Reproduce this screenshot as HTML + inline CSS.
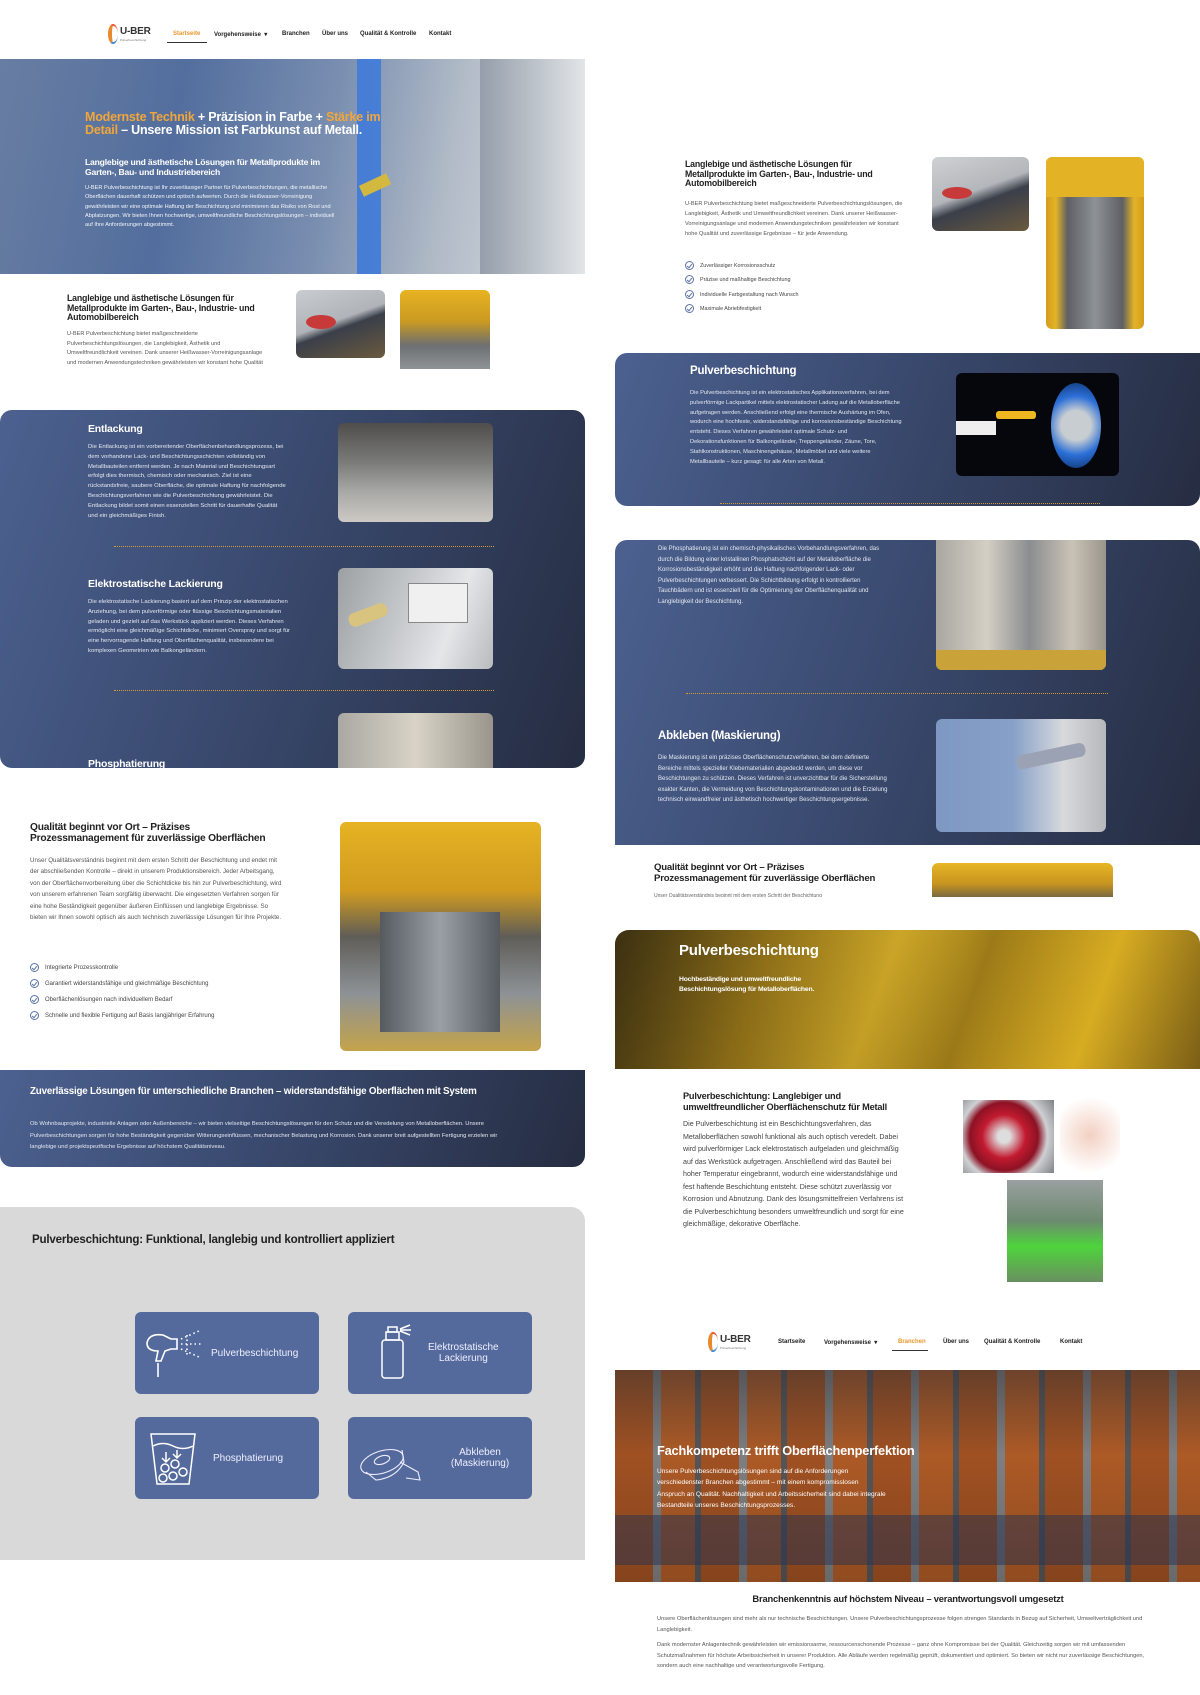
<!DOCTYPE html>
<html><head><meta charset="utf-8"><style>
*{margin:0;padding:0;box-sizing:border-box}
body{width:1200px;height:1695px;position:relative;background:#fff;font-family:"Liberation Sans",sans-serif;overflow:hidden;color:#333}
.a{position:absolute}
.nav{font-size:6px;color:#222;font-weight:bold}
.h{font-weight:bold;color:#222;letter-spacing:-0.2px}
.w{color:#fff}
.b{font-size:6px;line-height:10px;color:#555}
.bw{font-size:5.9px;line-height:9.8px;color:#e4e8f0}
.img{position:absolute;border-radius:6px;overflow:hidden}
.dark{background:linear-gradient(110deg,#4c6190 0%,#3a4a6f 45%,#262d42 100%)}
.dot{position:absolute;border-top:1px dotted #d49a3a;height:0}
.chk{display:inline-block;width:9px;height:9px;border:1px solid #5c72a8;border-radius:50%;vertical-align:middle;margin-right:6px;position:relative}
.chk:after{content:"";position:absolute;left:2px;top:1px;width:2px;height:4px;border:solid #5c72a8;border-width:0 1px 1px 0;transform:rotate(40deg)}
.li{font-size:6px;color:#444;height:15px;line-height:15px}
.card{position:absolute;background:#546a9c;border-radius:6px;color:#eef;font-size:10px;display:flex;align-items:center}
</style></head><body>

<!-- NAV 1 -->
<div class="a" style="left:108px;top:22px;width:44px;height:24px">
 <div class="a" style="left:0;top:2px;width:10px;height:20px;border-radius:50%;border-left:4px solid #e8892e;border-top:2px solid #e53;border-bottom:2px solid #4a8ad0"></div>
 <div class="a h" style="left:12px;top:4px;font-size:10px;color:#333">U-BER</div>
 <div class="a" style="left:12px;top:16px;font-size:3px;color:#777">Pulverbeschichtung</div>
</div>
<div class="a nav" style="left:173px;top:31px;color:#e8962e">Startseite</div>
<div class="a" style="left:167px;top:42px;width:40px;height:1px;background:#333"></div>
<div class="a nav" style="left:214px;top:31px">Vorgehensweise &nbsp;▾</div>
<div class="a nav" style="left:282px;top:31px">Branchen</div>
<div class="a nav" style="left:322px;top:31px">Über uns</div>
<div class="a nav" style="left:360px;top:31px">Qualität &amp; Kontrolle</div>
<div class="a nav" style="left:429px;top:31px">Kontakt</div>

<!-- HERO 1 -->
<div class="a" style="left:0;top:59px;width:585px;height:215px;background:linear-gradient(100deg,#7d93b4 0%,#5c79a8 30%,#8398b8 55%,#b9c2cc 75%,#dfe3e6 100%);overflow:hidden">
 <div class="a" style="left:357px;top:0;width:24px;height:215px;background:#4a84e0"></div>
 <div class="a" style="left:360px;top:120px;width:30px;height:12px;background:#e3c53a;transform:rotate(-25deg)"></div>
 <div class="a" style="left:480px;top:0;width:105px;height:215px;background:linear-gradient(90deg,#9aa3ad,#e2e5e8)"></div>
 <div class="a" style="left:0;top:0;width:585px;height:215px;background:linear-gradient(90deg,rgba(40,60,110,.25),rgba(40,60,110,0))"></div>
 <div class="a h" style="left:85px;top:52px;font-size:12.5px;line-height:13px;color:#fff;width:300px">
  <span style="color:#f2a63a">Modernste Technik</span> + Präzision in Farbe + <span style="color:#f2a63a">Stärke im Detail</span> – Unsere Mission ist Farbkunst auf Metall.</div>
 <div class="a h" style="left:85px;top:98px;font-size:8.6px;line-height:10px;color:#fff;width:255px">Langlebige und ästhetische Lösungen für Metallprodukte im Garten-, Bau- und Industriebereich</div>
 <div class="a" style="left:85px;top:125px;font-size:5.6px;line-height:9.3px;color:#f3f5fa;width:255px">U-BER Pulverbeschichtung ist Ihr zuverlässiger Partner für Pulverbeschichtungen, die metallische Oberflächen dauerhaft schützen und optisch aufwerten. Durch die Heißwasser-Vorreinigung gewährleisten wir eine optimale Haftung der Beschichtung und minimieren das Risiko von Rost und Abplatzungen. Wir bieten Ihnen hochwertige, umweltfreundliche Beschichtungslösungen – individuell auf Ihre Anforderungen abgestimmt.</div>
</div>

<!-- Section 1 left -->
<div class="a h" style="left:67px;top:294px;font-size:8.8px;line-height:9.5px;width:200px">Langlebige und ästhetische Lösungen für Metallprodukte im Garten-, Bau-, Industrie- und Automobilbereich</div>
<div class="a" style="left:67px;top:330px;width:200px;height:38px;overflow:hidden;font-size:5.6px;line-height:9.5px;color:#555">U-BER Pulverbeschichtung bietet maßgeschneiderte Pulverbeschichtungslösungen, die Langlebigkeit, Ästhetik und Umweltfreundlichkeit vereinen. Dank unserer Heißwasser-Vorreinigungsanlage und modernen Anwendungstechniken gewährleisten wir konstant hohe Qualität</div>
<div class="img" style="left:296px;top:290px;width:89px;height:68px;background:linear-gradient(160deg,#c9ccd0 0%,#b0b4b9 45%,#3a3f4a 55%,#6b5a3e 100%)"><div class="a" style="left:10px;top:25px;width:30px;height:14px;background:#c83a3a;border-radius:50%"></div></div>
<div class="a" style="left:400px;top:290px;width:90px;height:79px;background:linear-gradient(180deg,#e7b321 0%,#c99a22 40%,#6d6f72 70%,#8e9396 100%);border-radius:6px 6px 0 0"></div>

<!-- Dark panel left -->
<div class="a dark" style="left:0;top:410px;width:585px;height:358px;border-radius:12px;overflow:hidden">
 <div class="a h w" style="left:88px;top:13px;font-size:10.5px">Entlackung</div>
 <div class="a bw" style="left:88px;top:33px;width:200px">Die Entlackung ist ein vorbereitender Oberflächenbehandlungsprozess, bei dem vorhandene Lack- und Beschichtungsschichten vollständig von Metallbauteilen entfernt werden. Je nach Material und Beschichtungsart erfolgt dies thermisch, chemisch oder mechanisch. Ziel ist eine rückstandsfreie, saubere Oberfläche, die optimale Haftung für nachfolgende Beschichtungsverfahren wie die Pulverbeschichtung gewährleistet. Die Entlackung bildet somit einen essenziellen Schritt für dauerhafte Qualität und ein gleichmäßiges Finish.</div>
 <div class="img" style="left:338px;top:13px;width:155px;height:99px;background:linear-gradient(180deg,#4e4d4c 0%,#7b7b79 40%,#a9a9a7 70%,#cdc9c4 100%)"></div>
 <div class="dot" style="left:114px;top:136px;width:380px"></div>
 <div class="a h w" style="left:88px;top:168px;font-size:10.5px">Elektrostatische Lackierung</div>
 <div class="a bw" style="left:88px;top:188px;width:205px">Die elektrostatische Lackierung basiert auf dem Prinzip der elektrostatischen Anziehung, bei dem pulverförmige oder flüssige Beschichtungsmaterialien geladen und gezielt auf das Werkstück appliziert werden. Dieses Verfahren ermöglicht eine gleichmäßige Schichtdicke, minimiert Overspray und sorgt für eine hervorragende Haftung und Oberflächenqualität, insbesondere bei komplexen Geometrien wie Balkongeländern.</div>
 <div class="img" style="left:338px;top:158px;width:155px;height:101px;background:linear-gradient(110deg,#9da0a3 0%,#c4c7ca 40%,#e4e6e8 70%,#b8bbbe 100%)"><div class="a" style="left:70px;top:15px;width:60px;height:40px;background:#f0f0f0;border:1px solid #888"></div><div class="a" style="left:10px;top:40px;width:40px;height:14px;background:#d8c47e;border-radius:6px;transform:rotate(-20deg)"></div></div>
 <div class="dot" style="left:114px;top:280px;width:380px"></div>
 <div class="a h w" style="left:88px;top:348px;font-size:10.5px">Phosphatierung</div>
 <div class="img" style="left:338px;top:303px;width:155px;height:60px;background:linear-gradient(90deg,#aaa8a2,#d8d3c6 50%,#9a958c)"></div>
</div>

<!-- Qualität left -->
<div class="a h" style="left:30px;top:822px;font-size:10.2px;line-height:11px;width:255px">Qualität beginnt vor Ort – Präzises Prozessmanagement für zuverlässige Oberflächen</div>
<div class="a b" style="left:30px;top:855px;width:255px;font-size:6.2px;line-height:11.4px">Unser Qualitätsverständnis beginnt mit dem ersten Schritt der Beschichtung und endet mit der abschließenden Kontrolle – direkt in unserem Produktionsbereich. Jeder Arbeitsgang, von der Oberflächenvorbereitung über die Schichtdicke bis hin zur Pulverbeschichtung, wird von unserem erfahrenen Team sorgfältig überwacht. Die eingesetzten Verfahren sorgen für eine hohe Beständigkeit gegenüber äußeren Einflüssen und langlebige Ergebnisse. So bieten wir Ihnen sowohl optisch als auch technisch zuverlässige Lösungen für Ihre Projekte.</div>
<div class="a" style="left:30px;top:961px">
 <div class="li"><span class="chk"></span>Integrierte Prozesskontrolle</div>
 <div class="li" style="margin-top:1px"><span class="chk"></span>Garantiert widerstandsfähige und gleichmäßige Beschichtung</div>
 <div class="li" style="margin-top:1px"><span class="chk"></span>Oberflächenlösungen nach individuellem Bedarf</div>
 <div class="li" style="margin-top:1px"><span class="chk"></span>Schnelle und flexible Fertigung auf Basis langjähriger Erfahrung</div>
</div>
<div class="img" style="left:340px;top:822px;width:201px;height:229px;background:linear-gradient(180deg,#e5b323 0%,#d19b1f 30%,#5f5d58 50%,#8d9296 75%,#c4a34a 100%)">
 <div class="a" style="left:40px;top:90px;width:120px;height:120px;background:linear-gradient(90deg,#555a5f,#9aa0a6,#555a5f)"></div></div>

<!-- Dark band -->
<div class="a dark" style="left:0;top:1070px;width:585px;height:97px;border-radius:0 0 12px 12px">
 <div class="a h w" style="left:30px;top:17px;font-size:9.8px;line-height:10.5px;width:450px">Zuverlässige Lösungen für unterschiedliche Branchen – widerstandsfähige Oberflächen mit System</div>
 <div class="a" style="left:30px;top:49px;width:490px;font-size:5.8px;line-height:11.5px;color:#e4e8f0">Ob Wohnbauprojekte, industrielle Anlagen oder Außenbereiche – wir bieten vielseitige Beschichtungslösungen für den Schutz und die Veredelung von Metalloberflächen. Unsere Pulverbeschichtungen sorgen für hohe Beständigkeit gegenüber Witterungseinflüssen, mechanischer Belastung und Korrosion. Dank unserer breit aufgestellten Fertigung erzielen wir langlebige und projektspezifische Ergebnisse auf höchstem Qualitätsniveau.</div>
</div>

<!-- Gray panel -->
<div class="a" style="left:0;top:1207px;width:585px;height:353px;background:#d9d9d9;border-radius:0 14px 0 0">
 <div class="a h" style="left:32px;top:26px;font-size:11.6px">Pulverbeschichtung: Funktional, langlebig und kontrolliert appliziert</div>
</div>
<div class="card" style="left:135px;top:1312px;width:184px;height:82px">
 <svg width="70" height="60" viewBox="0 0 70 60" style="margin-left:6px" fill="none" stroke="#fff" stroke-width="1.6"><path d="M6 20 Q8 10 22 12 L30 16 H36 V26 H30 L24 28 L20 38 H15 L17 28 Q6 28 6 20Z"/><path d="M17 40 V54"/><g stroke-dasharray="1.5 3"><path d="M40 16 L58 8"/><path d="M40 21 H60"/><path d="M40 26 L58 34"/><path d="M46 12 V32"/></g></svg>
 <span>Pulverbeschichtung</span></div>
<div class="card" style="left:348px;top:1312px;width:184px;height:82px">
 <svg width="60" height="60" viewBox="0 0 60 60" style="margin-left:18px" fill="none" stroke="#fff" stroke-width="1.5"><rect x="22" y="4" width="9" height="5"/><rect x="20" y="9" width="13" height="8"/><rect x="16" y="17" width="21" height="38" rx="3"/><path d="M34 6 L44 2 M34 7 H45 M34 8 L44 12"/></svg>
 <span style="text-align:center;margin-left:2px">Elektrostatische<br>Lackierung</span></div>
<div class="card" style="left:135px;top:1417px;width:184px;height:82px">
 <svg width="60" height="64" viewBox="0 0 60 64" style="margin-left:8px" fill="none" stroke="#fff" stroke-width="1.5"><path d="M8 8 H52 L46 58 H14Z"/><path d="M10 20 Q20 15 30 20 T50 20"/><path d="M23 26 V36 M19 32 L23 36 L27 32 M34 24 V32 M30 28 L34 32 L38 28"/><circle cx="22" cy="42" r="4"/><circle cx="32" cy="38" r="4"/><circle cx="20" cy="52" r="4"/><circle cx="30" cy="50" r="4"/><circle cx="40" cy="46" r="4"/></svg>
 <span style="margin-left:10px">Phosphatierung</span></div>
<div class="card" style="left:348px;top:1417px;width:184px;height:82px">
 <svg width="80" height="60" viewBox="0 0 80 60" style="margin-left:8px" fill="none" stroke="#eef" stroke-width="1.1"><ellipse cx="26" cy="34" rx="22" ry="11" transform="rotate(-18 26 34)"/><ellipse cx="26" cy="32" rx="8" ry="4" transform="rotate(-18 26 32)"/><path d="M10 44 L20 52 Q40 50 48 34 L46 22"/><path d="M44 34 L62 44 L64 52 L50 50"/></svg>
 <span style="text-align:center;flex:1;margin-right:8px">Abkleben<br>(Maskierung)</span></div>

<!-- RIGHT COLUMN -->
<div class="a h" style="left:685px;top:160px;font-size:8.8px;line-height:9.6px;width:200px">Langlebige und ästhetische Lösungen für Metallprodukte im Garten-, Bau-, Industrie- und Automobilbereich</div>
<div class="a" style="left:685px;top:199px;width:222px;font-size:5.6px;line-height:10px;color:#555">U-BER Pulverbeschichtung bietet maßgeschneiderte Pulverbeschichtungslösungen, die Langlebigkeit, Ästhetik und Umweltfreundlichkeit vereinen. Dank unserer Heißwasser-Vorreinigungsanlage und modernen Anwendungstechniken gewährleisten wir konstant hohe Qualität und zuverlässige Ergebnisse – für jede Anwendung.</div>
<div class="a" style="left:685px;top:259px">
 <div class="li" style="font-size:5.4px;height:14.4px;line-height:14.4px"><span class="chk"></span>Zuverlässiger Korrosionsschutz</div>
 <div class="li" style="font-size:5.4px;height:14.4px;line-height:14.4px"><span class="chk"></span>Präzise und maßhaltige Beschichtung</div>
 <div class="li" style="font-size:5.4px;height:14.4px;line-height:14.4px"><span class="chk"></span>Individuelle Farbgestaltung nach Wunsch</div>
 <div class="li" style="font-size:5.4px;height:14.4px;line-height:14.4px"><span class="chk"></span>Maximale Abriebfestigkeit</div>
</div>
<div class="img" style="left:932px;top:157px;width:97px;height:74px;background:linear-gradient(160deg,#cfd1d4 0%,#b3b6ba 45%,#3a3f4a 58%,#6b5a3e 100%)"><div class="a" style="left:10px;top:30px;width:30px;height:12px;background:#c83a3a;border-radius:50%"></div></div>
<div class="img" style="left:1046px;top:157px;width:98px;height:172px;background:linear-gradient(90deg,#d49d1e 0%,#e4b325 10%,#5e6064 22%,#8d9296 50%,#5e6064 78%,#e4b325 90%,#d49d1e 100%)"><div class="a" style="left:0;top:0;width:98px;height:40px;background:#e4b325"></div></div>

<div class="a dark" style="left:615px;top:353px;width:585px;height:153px;border-radius:12px 0 12px 12px;overflow:hidden">
 <div class="a h w" style="left:75px;top:12px;font-size:11.5px">Pulverbeschichtung</div>
 <div class="a bw" style="left:75px;top:36px;width:215px;font-size:5.7px">Die Pulverbeschichtung ist ein elektrostatisches Applikationsverfahren, bei dem pulverförmige Lackpartikel mittels elektrostatischer Ladung auf die Metalloberfläche aufgetragen werden. Anschließend erfolgt eine thermische Aushärtung im Ofen, wodurch eine hochfeste, widerstandsfähige und korrosionsbeständige Beschichtung entsteht. Dieses Verfahren gewährleistet optimale Schutz- und Dekorationsfunktionen für Balkongeländer, Treppengeländer, Zäune, Tore, Stahlkonstruktionen, Maschinengehäuse, Metallmöbel und viele weitere Metallbauteile – kurz gesagt: für alle Arten von Metall.</div>
 <div class="img" style="left:341px;top:20px;width:163px;height:103px;background:#05070c"><div class="a" style="left:95px;top:10px;width:50px;height:85px;border-radius:50%;background:radial-gradient(circle,#c8cdd2 30%,#2b6fd6 60%,#0c2d66 100%)"></div><div class="a" style="left:40px;top:38px;width:40px;height:8px;background:#f0b820;border-radius:3px"></div><div class="a" style="left:0;top:48px;width:40px;height:14px;background:#eee"></div></div>
 <div class="dot" style="left:105px;top:150px;width:380px"></div>
</div>

<div class="a dark" style="left:615px;top:540px;width:585px;height:305px;border-radius:12px 12px 0 0;overflow:hidden">
 <div class="a bw" style="left:43px;top:4px;width:235px;font-size:6px;line-height:10.5px">Die Phosphatierung ist ein chemisch-physikalisches Vorbehandlungsverfahren, das durch die Bildung einer kristallinen Phosphatschicht auf der Metalloberfläche die Korrosionsbeständigkeit erhöht und die Haftung nachfolgender Lack- oder Pulverbeschichtungen verbessert. Die Schichtbildung erfolgt in kontrollierten Tauchbädern und ist essenziell für die Optimierung der Oberflächenqualität und Langlebigkeit der Beschichtung.</div>
 <div class="img" style="left:321px;top:0;width:170px;height:130px;border-radius:0 0 6px 6px;background:linear-gradient(90deg,#a9a7a0,#d4cfc4 30%,#8b8d90 55%,#c9c3b6 80%,#9a958c)"><div class="a" style="left:0;top:110px;width:170px;height:20px;background:#c9a23a"></div></div>
 <div class="dot" style="left:71px;top:153px;width:422px"></div>
 <div class="a h w" style="left:43px;top:190px;font-size:11.5px">Abkleben (Maskierung)</div>
 <div class="a bw" style="left:43px;top:213px;width:235px;font-size:6px;line-height:10.5px">Die Maskierung ist ein präzises Oberflächenschutzverfahren, bei dem definierte Bereiche mittels spezieller Klebematerialien abgedeckt werden, um diese vor Beschichtungen zu schützen. Dieses Verfahren ist unverzichtbar für die Sicherstellung exakter Kanten, die Vermeidung von Beschichtungskontaminationen und die Erzielung technisch einwandfreier und ästhetisch hochwertiger Beschichtungsergebnisse.</div>
 <div class="img" style="left:321px;top:179px;width:170px;height:113px;background:linear-gradient(90deg,#7d98c2 0%,#86a0c8 45%,#d8d9dc 75%,#b7b8bb 100%)"><div class="a" style="left:80px;top:30px;width:70px;height:14px;background:#9aa2b4;border-radius:6px;transform:rotate(-12deg)"></div></div>
</div>

<div class="a h" style="left:654px;top:863px;font-size:9.6px;line-height:10.5px;width:240px">Qualität beginnt vor Ort – Präzises Prozessmanagement für zuverlässige Oberflächen</div>
<div class="a" style="left:654px;top:893px;width:230px;height:4px;overflow:hidden;font-size:5px;color:#666;line-height:6px">Unser Qualitätsverständnis beginnt mit dem ersten Schritt der Beschichtung</div>
<div class="a" style="left:932px;top:863px;width:181px;height:34px;background:linear-gradient(180deg,#e8b626,#c8951f 60%,#7a6a40);border-radius:6px 6px 0 0"></div>

<div class="a" style="left:615px;top:930px;width:585px;height:139px;border-radius:14px 14px 0 0;overflow:hidden;background:linear-gradient(110deg,#5c4a1a 0%,#b18a1e 25%,#d9b12a 45%,#9c7a18 60%,#d7ac22 80%,#7a5e16 100%)">
 <div class="a" style="left:0;top:0;width:585px;height:139px;background:linear-gradient(90deg,rgba(0,0,0,.35),rgba(0,0,0,0) 60%)"></div>
 <div class="a h w" style="left:64px;top:12px;font-size:15px">Pulverbeschichtung</div>
 <div class="a h w" style="left:64px;top:45px;font-size:6.8px;line-height:10px;width:170px">Hochbeständige und umweltfreundliche Beschichtungslösung für Metalloberflächen.</div>
</div>

<div class="a h" style="left:683px;top:1091px;font-size:9.2px;line-height:10.5px;width:230px">Pulverbeschichtung: Langlebiger und umweltfreundlicher Oberflächenschutz für Metall</div>
<div class="a" style="left:683px;top:1118px;width:225px;font-size:7.1px;line-height:12.5px;color:#444">Die Pulverbeschichtung ist ein Beschichtungsverfahren, das Metalloberflächen sowohl funktional als auch optisch veredelt. Dabei wird pulverförmiger Lack elektrostatisch aufgeladen und gleichmäßig auf das Werkstück aufgetragen. Anschließend wird das Bauteil bei hoher Temperatur eingebrannt, wodurch eine widerstandsfähige und fest haftende Beschichtung entsteht. Diese schützt zuverlässig vor Korrosion und Abnutzung. Dank des lösungsmittelfreien Verfahrens ist die Pulverbeschichtung besonders umweltfreundlich und sorgt für eine gleichmäßige, dekorative Oberfläche.</div>
<div class="a" style="left:963px;top:1100px;width:91px;height:73px;background:radial-gradient(circle at 45% 50%,#ddd 10%,#c21a2f 35%,#8c1224 55%,#cfd0d3 70%,#7f8186 100%)"></div>
<div class="a" style="left:1060px;top:1090px;width:60px;height:90px;background:radial-gradient(circle,rgba(220,120,80,.35),rgba(255,255,255,0) 70%)"></div>
<div class="a" style="left:1007px;top:1180px;width:96px;height:102px;background:linear-gradient(180deg,#9aa0a0,#6d8a70 40%,#4ed43c 65%,#6a8f60)"></div>

<!-- NAV 2 -->
<div class="a" style="left:708px;top:1330px;width:44px;height:24px">
 <div class="a" style="left:0;top:2px;width:10px;height:20px;border-radius:50%;border-left:4px solid #e8892e;border-top:2px solid #e53;border-bottom:2px solid #4a8ad0"></div>
 <div class="a h" style="left:12px;top:4px;font-size:10px;color:#333">U-BER</div>
 <div class="a" style="left:12px;top:16px;font-size:3px;color:#777">Pulverbeschichtung</div>
</div>
<div class="a nav" style="left:778px;top:1339px">Startseite</div>
<div class="a nav" style="left:824px;top:1339px">Vorgehensweise &nbsp;▾</div>
<div class="a nav" style="left:898px;top:1339px;color:#e8962e">Branchen</div>
<div class="a" style="left:892px;top:1350px;width:36px;height:1px;background:#333"></div>
<div class="a nav" style="left:943px;top:1339px">Über uns</div>
<div class="a nav" style="left:984px;top:1339px">Qualität &amp; Kontrolle</div>
<div class="a nav" style="left:1060px;top:1339px">Kontakt</div>

<div class="a" style="left:615px;top:1370px;width:585px;height:212px;overflow:hidden;background:repeating-linear-gradient(90deg,#b25a26 0,#b25a26 38px,#8c8d90 38px,#8c8d90 46px,#c0642a 46px,#c0642a 80px,#5f5f62 80px,#5f5f62 86px)">
 <div class="a" style="left:0;top:0;width:585px;height:212px;background:linear-gradient(180deg,rgba(40,40,45,.55),rgba(0,0,0,.1) 40%,rgba(0,0,0,.25))"></div>
 <div class="a" style="left:0;top:145px;width:585px;height:50px;background:rgba(40,50,80,.5)"></div>
 <div class="a h w" style="left:42px;top:73px;font-size:12.8px">Fachkompetenz trifft Oberflächenperfektion</div>
 <div class="a" style="left:42px;top:96px;width:230px;font-size:6.6px;line-height:11.3px;color:#fff">Unsere Pulverbeschichtungslösungen sind auf die Anforderungen verschiedenster Branchen abgestimmt – mit einem kompromisslosen Anspruch an Qualität. Nachhaltigkeit und Arbeitssicherheit sind dabei integrale Bestandteile unseres Beschichtungsprozesses.</div>
</div>

<div class="a h" style="left:616px;top:1593px;width:584px;text-align:center;font-size:9.4px">Branchenkenntnis auf höchstem Niveau – verantwortungsvoll umgesetzt</div>
<div class="a" style="left:657px;top:1614px;width:490px;font-size:5.7px;line-height:10.5px;color:#555">Unsere Oberflächenlösungen sind mehr als nur technische Beschichtungen. Unsere Pulverbeschichtungsprozesse folgen strengen Standards in Bezug auf Sicherheit, Umweltverträglichkeit und Langlebigkeit.</div>
<div class="a" style="left:657px;top:1640px;width:490px;font-size:5.7px;line-height:10.5px;color:#555">Dank modernster Anlagentechnik gewährleisten wir emissionsarme, ressourcenschonende Prozesse – ganz ohne Kompromisse bei der Qualität. Gleichzeitig sorgen wir mit umfassenden Schutzmaßnahmen für höchste Arbeitssicherheit in unserer Produktion. Alle Abläufe werden regelmäßig geprüft, dokumentiert und optimiert. So bieten wir nicht nur zuverlässige Beschichtungen, sondern auch eine nachhaltige und verantwortungsvolle Fertigung.</div>
</body></html>
